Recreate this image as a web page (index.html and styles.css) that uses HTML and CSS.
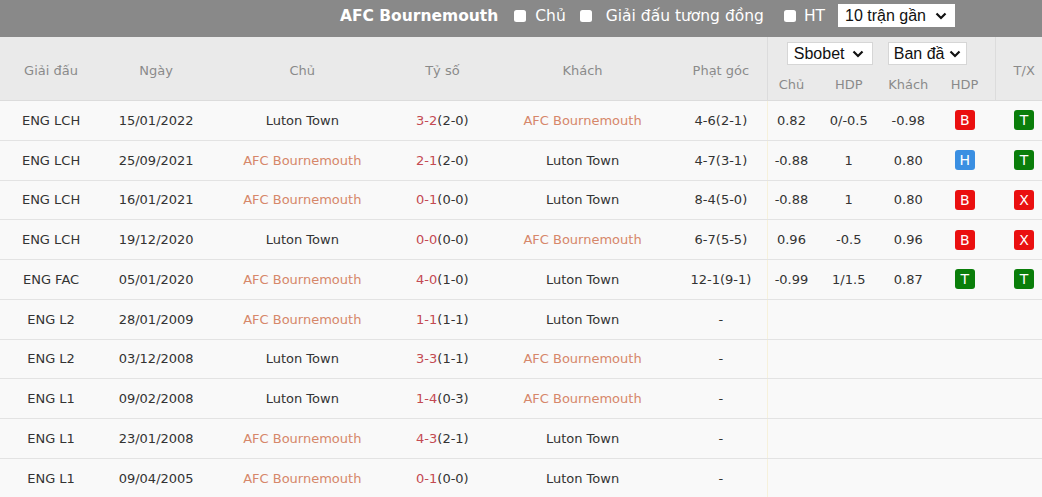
FILE: index.html
```html
<!DOCTYPE html>
<html lang="vi">
<head>
<meta charset="utf-8">
<title>AFC Bournemouth - Luton Town</title>
<link rel="stylesheet" href="styles.css">
</head>
<body>
<div class="topbar">
  <span class="title">AFC Bournemouth</span>
  <label class="opt opt-1"><span class="cb"></span>Chủ</label>
  <label class="opt opt-2"><span class="cb"></span>Giải đấu tương đồng</label>
  <label class="opt opt-3"><span class="cb"></span>HT</label>
  <div class="sel sel-top"><span>10 trận gần</span><svg class="chev" viewBox="0 0 12 8" width="12" height="8"><path d="M1.5 1.5 L6 6 L10.5 1.5" fill="none" stroke="#111" stroke-width="2.2"/></svg></div>
</div>
<table class="h2h">
  <colgroup>
    <col class="c-lg"><col class="c-date"><col class="c-team"><col class="c-score"><col class="c-team"><col class="c-corner">
    <col class="c-o1"><col class="c-o2"><col class="c-o3"><col class="c-o4"><col class="c-tx">
  </colgroup>
  <thead>
    <tr class="hr1">
      <th rowspan="2" class="main">Giải đấu</th>
      <th rowspan="2" class="main">Ngày</th>
      <th rowspan="2" class="main">Chủ</th>
      <th rowspan="2" class="main">Tỷ số</th>
      <th rowspan="2" class="main">Khách</th>
      <th rowspan="2" class="main">Phạt góc</th>
      <th colspan="4" class="odds-head">
        <div class="sels">
          <div class="sel sel-a"><span>Sbobet</span><svg class="chev" viewBox="0 0 12 8" width="12" height="8"><path d="M1.5 1.5 L6 6 L10.5 1.5" fill="none" stroke="#111" stroke-width="2.2"/></svg></div>
          <div class="sel sel-b"><span>Ban đầ</span><svg class="chev" viewBox="0 0 12 8" width="12" height="8"><path d="M1.5 1.5 L6 6 L10.5 1.5" fill="none" stroke="#111" stroke-width="2.2"/></svg></div>
        </div>
      </th>
      <th rowspan="2" class="main tx-head">T/X</th>
    </tr>
    <tr class="hr2">
      <th class="sub first">Chủ</th>
      <th class="sub">HDP</th>
      <th class="sub">Khách</th>
      <th class="sub">HDP</th>
    </tr>
  </thead>
  <tbody>
    <tr><td>ENG LCH</td><td>15/01/2022</td><td>Luton Town</td><td><span class="sc">3-2</span>(2-0)</td><td class="hl">AFC Bournemouth</td><td>4-6(2-1)</td><td class="o1">0.82</td><td>0/-0.5</td><td>-0.98</td><td><span class="bd red">B</span></td><td><span class="bd green">T</span></td></tr>
    <tr><td>ENG LCH</td><td>25/09/2021</td><td class="hl">AFC Bournemouth</td><td><span class="sc">2-1</span>(2-0)</td><td>Luton Town</td><td>4-7(3-1)</td><td class="o1">-0.88</td><td>1</td><td>0.80</td><td><span class="bd blue">H</span></td><td><span class="bd green">T</span></td></tr>
    <tr><td>ENG LCH</td><td>16/01/2021</td><td class="hl">AFC Bournemouth</td><td><span class="sc">0-1</span>(0-0)</td><td>Luton Town</td><td>8-4(5-0)</td><td class="o1">-0.88</td><td>1</td><td>0.80</td><td><span class="bd red">B</span></td><td><span class="bd red">X</span></td></tr>
    <tr><td>ENG LCH</td><td>19/12/2020</td><td>Luton Town</td><td><span class="sc">0-0</span>(0-0)</td><td class="hl">AFC Bournemouth</td><td>6-7(5-5)</td><td class="o1">0.96</td><td>-0.5</td><td>0.96</td><td><span class="bd red">B</span></td><td><span class="bd red">X</span></td></tr>
    <tr><td>ENG FAC</td><td>05/01/2020</td><td class="hl">AFC Bournemouth</td><td><span class="sc">4-0</span>(1-0)</td><td>Luton Town</td><td>12-1(9-1)</td><td class="o1">-0.99</td><td>1/1.5</td><td>0.87</td><td><span class="bd green">T</span></td><td><span class="bd green">T</span></td></tr>
    <tr><td>ENG L2</td><td>28/01/2009</td><td class="hl">AFC Bournemouth</td><td><span class="sc">1-1</span>(1-1)</td><td>Luton Town</td><td>-</td><td class="o1"></td><td></td><td></td><td></td><td></td></tr>
    <tr><td>ENG L2</td><td>03/12/2008</td><td>Luton Town</td><td><span class="sc">3-3</span>(1-1)</td><td class="hl">AFC Bournemouth</td><td>-</td><td class="o1"></td><td></td><td></td><td></td><td></td></tr>
    <tr><td>ENG L1</td><td>09/02/2008</td><td>Luton Town</td><td><span class="sc">1-4</span>(0-3)</td><td class="hl">AFC Bournemouth</td><td>-</td><td class="o1"></td><td></td><td></td><td></td><td></td></tr>
    <tr><td>ENG L1</td><td>23/01/2008</td><td class="hl">AFC Bournemouth</td><td><span class="sc">4-3</span>(2-1)</td><td>Luton Town</td><td>-</td><td class="o1"></td><td></td><td></td><td></td><td></td></tr>
    <tr><td>ENG L1</td><td>09/04/2005</td><td class="hl">AFC Bournemouth</td><td><span class="sc">0-1</span>(0-0)</td><td>Luton Town</td><td>-</td><td class="o1"></td><td></td><td></td><td></td><td></td></tr>
  </tbody>
</table>
</body>
</html>
```

FILE: styles.css
```css
html, body {
  margin: 0;
  padding: 0;
}
body {
  width: 1042px;
  height: 497px;
  overflow: hidden;
  background: #f9f9f9;
  font-family: "DejaVu Sans", Verdana, sans-serif;
  color: #333;
}

/* top bar */
.topbar {
  height: 37px;
  box-sizing: border-box;
  background: #898989;
  display: flex;
  align-items: center;
  justify-content: flex-end;
  padding: 0 87px 6px 0;
  color: #fff;
}
.title {
  font-weight: bold;
  font-size: 15.5px;
}
.opt {
  display: flex;
  align-items: center;
  font-size: 15.5px;
}
.opt-1 { margin-left: 16px; }
.opt-2 { margin-left: 14px; }
.opt-3 { margin-left: 20px; }
.cb {
  display: inline-block;
  width: 12px;
  height: 12px;
  background: #fff;
  border-radius: 2.5px;
  margin-right: 9px;
}
.opt-2 .cb { margin-right: 14px; }
.opt-3 .cb { margin-right: 8px; }

.sel {
  display: flex;
  align-items: center;
  justify-content: space-between;
  background: #fff;
  color: #111;
  font-family: "Liberation Sans", Arial, sans-serif;
  font-size: 16px;
  box-sizing: border-box;
  height: 23px;
}
.sel-top {
  margin-left: 13px;
  width: 117px;
  padding: 0 8px 0 7px;
}
.chev { display: block; }

/* table */
.h2h {
  border-collapse: collapse;
  table-layout: fixed;
  width: 1052px;
  font-size: 13px;
}
.c-lg { width: 102px; }
.c-date { width: 108px; }
.c-team { width: 184px; }
.c-score { width: 96px; }
.c-corner { width: 93px; }
.c-o1 { width: 47px; }
.c-o2 { width: 68px; }
.c-o3 { width: 51px; }
.c-o4 { width: 62px; }
.c-tx { width: 56px; }

.h2h thead th {
  background: #eaeaea;
  color: #8a8a8a;
  font-weight: normal;
  padding: 0;
  text-align: center;
  border-bottom: 1px solid #dcdcdc;
}
.h2h thead th.main { padding-top: 3px; }
.hr1 th { height: 34px; }
.hr2 th { height: 27px; }
.hr1 th.odds-head {
  border-bottom: none;
  border-left: 1px solid #dcdcdc;
  border-right: 1px solid #dcdcdc;
  vertical-align: top;
  padding-top: 5px;
  box-sizing: border-box;
}
.hr2 th.sub { padding-bottom: 2px; }
.hr2 th.first { border-left: 1px solid #dcdcdc; }
.hr2 th:last-child { border-right: 1px solid #dcdcdc; }

.sels {
  display: flex;
  justify-content: center;
  gap: 15px;
  padding-right: 10px;
}
.sel-a, .sel-b {
  border: 1px solid #d6d6d6;
}
.sel-a { width: 86px; padding: 0 8px 0 6px; }
.sel-b { width: 79px; padding: 0 5px 0 5px; }

.h2h tbody td {
  height: 38.78px;
  padding: 0;
  text-align: center;
  white-space: nowrap;
  border-bottom: 1px solid #e3e3e3;
  background: #f9f9f9;
  color: #333;
}
.h2h tbody td.o1 {
  border-left: 1px solid #f6f1dc;
}
.hl { color: #d6876a !important; }
.sc { color: #c44a52; }

.bd {
  display: inline-block;
  width: 20px;
  height: 20px;
  line-height: 20px;
  border-radius: 3px;
  color: #fff;
  font-size: 14px;
  text-align: center;
  vertical-align: middle;
}
.red { background: #ea1010; }
.blue { background: #3a8fe2; }
.green { background: #0a7e0a; }
```
